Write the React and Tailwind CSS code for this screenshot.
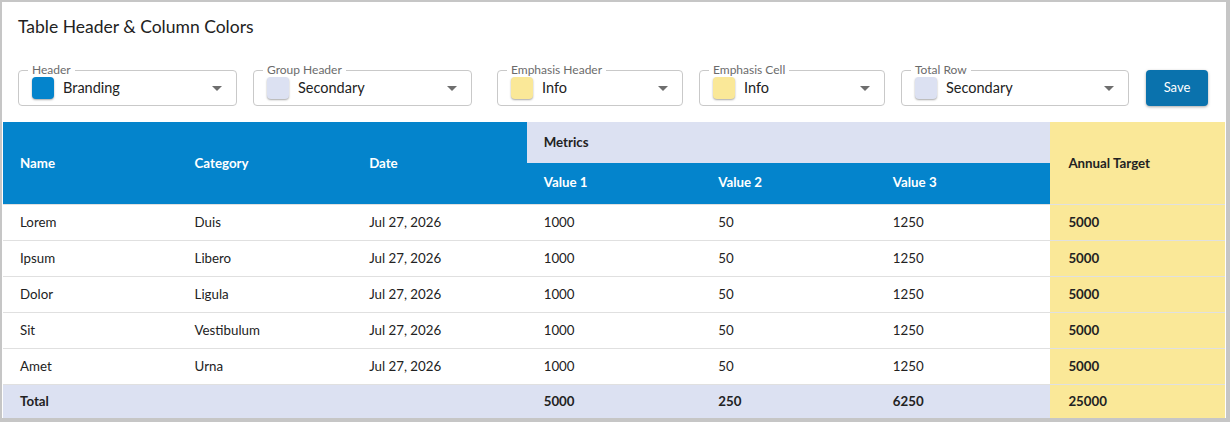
import React from 'react';

const FONT = { fontFamily: 'Lato, "Noto Sans", "Liberation Sans", sans-serif' };

// Dropdown settings shown above the table
const SELECTS = [
  { label: 'Header', value: 'Branding', swatch: 'bg-[#0484cc]', width: 'w-[219px]' },
  { label: 'Group Header', value: 'Secondary', swatch: 'bg-[#dce1f2]', width: 'w-[219px]' },
  { label: 'Emphasis Header', value: 'Info', swatch: 'bg-[#fae898]', width: 'w-[186px]' },
  { label: 'Emphasis Cell', value: 'Info', swatch: 'bg-[#fae898]', width: 'w-[186px]' },
  { label: 'Total Row', value: 'Secondary', swatch: 'bg-[#dce1f2]', width: 'w-[228px]' },
];

const ROWS = [
  ['Lorem', 'Duis'],
  ['Ipsum', 'Libero'],
  ['Dolor', 'Ligula'],
  ['Sit', 'Vestibulum'],
  ['Amet', 'Urna'],
];

function ColorSelect({ label, value, swatch, width }) {
  return (
    <div className={`relative h-[36px] ${width} rounded border border-[#c9c9c9] flex items-center pl-[13px] pr-[13px]`}>
      <span className="absolute -top-[8px] left-[9px] px-[4px] bg-white text-[12px] leading-[14px] text-[#6b6b6b]">
        {label}
      </span>
      <span className={`w-[22px] h-[22px] rounded-[4px] ${swatch} shadow-[0_1px_2px_rgba(0,0,0,0.35)]`} />
      <span className="ml-[9px] text-[14.5px] text-[#222] flex-1">{value}</span>
      <svg width="10" height="5" viewBox="0 0 10 5" className="mr-[1px]">
        <path d="M0 0 L10 0 L5 5 Z" fill="#6e6e6e" />
      </svg>
    </div>
  );
}

export default function App() {
  return (
    <div style={FONT} className="w-[1230px] h-[422px] bg-white">
      <div className="w-[1230px] h-[422px] border-t-2 border-l-2 border-r-[4px] border-b-[4px] border-[#c6c6c6] bg-white overflow-hidden">
        <div className="px-[16px] pt-[14px]">
          <h1 className="text-[17.5px] leading-[22px] text-[#222]">Table Header &amp; Column Colors</h1>
          <div className="mt-[32px] flex items-center">
            <ColorSelect {...SELECTS[0]} />
            <div className="ml-[16px]"><ColorSelect {...SELECTS[1]} /></div>
            <div className="ml-[25px]"><ColorSelect {...SELECTS[2]} /></div>
            <div className="ml-[16px]"><ColorSelect {...SELECTS[3]} /></div>
            <div className="ml-[16px]"><ColorSelect {...SELECTS[4]} /></div>
            <button className="ml-[17px] w-[62px] h-[36px] rounded bg-[#0a72ad] text-white text-[13px] shadow-[0_1px_3px_rgba(0,0,0,0.35)]">
              Save
            </button>
          </div>
        </div>

        <table className="mt-[16px] ml-[1px] w-[1222px] table-fixed border-collapse text-[13.3px] text-[#222]">
          <colgroup>
            {Array.from({ length: 7 }).map((_, i) => (
              <col key={i} className="w-[174.57px]" />
            ))}
          </colgroup>
          <thead>
            <tr className="h-[41px]">
              <th rowSpan={2} className="bg-[#0484cc] text-white font-bold text-left pl-[17px] pt-[2px]">Name</th>
              <th rowSpan={2} className="bg-[#0484cc] text-white font-bold text-left pl-[17px] pt-[2px]">Category</th>
              <th rowSpan={2} className="bg-[#0484cc] text-white font-bold text-left pl-[17px] pt-[2px]">Date</th>
              <th colSpan={3} className="bg-[#dce1f2] text-[#222] font-bold text-left pl-[17px]">Metrics</th>
              <th rowSpan={2} className="bg-[#fae898] text-[#222] font-bold text-left pl-[18px] pt-[2px]">Annual Target</th>
            </tr>
            <tr className="h-[41px]">
              <th className="bg-[#0484cc] text-white font-bold text-left pl-[17px]">Value 1</th>
              <th className="bg-[#0484cc] text-white font-bold text-left pl-[17px]">Value 2</th>
              <th className="bg-[#0484cc] text-white font-bold text-left pl-[17px]">Value 3</th>
            </tr>
          </thead>
          <tbody>
            {ROWS.map(([name, cat]) => (
              <tr key={name} className="h-[36px] border-t border-[#e0e0e0]">
                <td className="pl-[17px] pt-[1px]">{name}</td>
                <td className="pl-[17px] pt-[1px]">{cat}</td>
                <td className="pl-[17px] pt-[1px]">Jul 27, 2026</td>
                <td className="pl-[17px] pt-[1px]">1000</td>
                <td className="pl-[17px] pt-[1px]">50</td>
                <td className="pl-[17px] pt-[1px]">1250</td>
                <td className="pl-[18px] pt-[1px] bg-[#fae898] font-bold">5000</td>
              </tr>
            ))}
            <tr className="h-[36px] bg-[#dce1f2] font-bold border-t border-[#e0e0e0]">
              <td className="pl-[17px]">Total</td>
              <td />
              <td />
              <td className="pl-[17px]">5000</td>
              <td className="pl-[17px]">250</td>
              <td className="pl-[17px]">6250</td>
              <td className="pl-[18px] bg-[#fae898]">25000</td>
            </tr>
          </tbody>
        </table>
      </div>
    </div>
  );
}
